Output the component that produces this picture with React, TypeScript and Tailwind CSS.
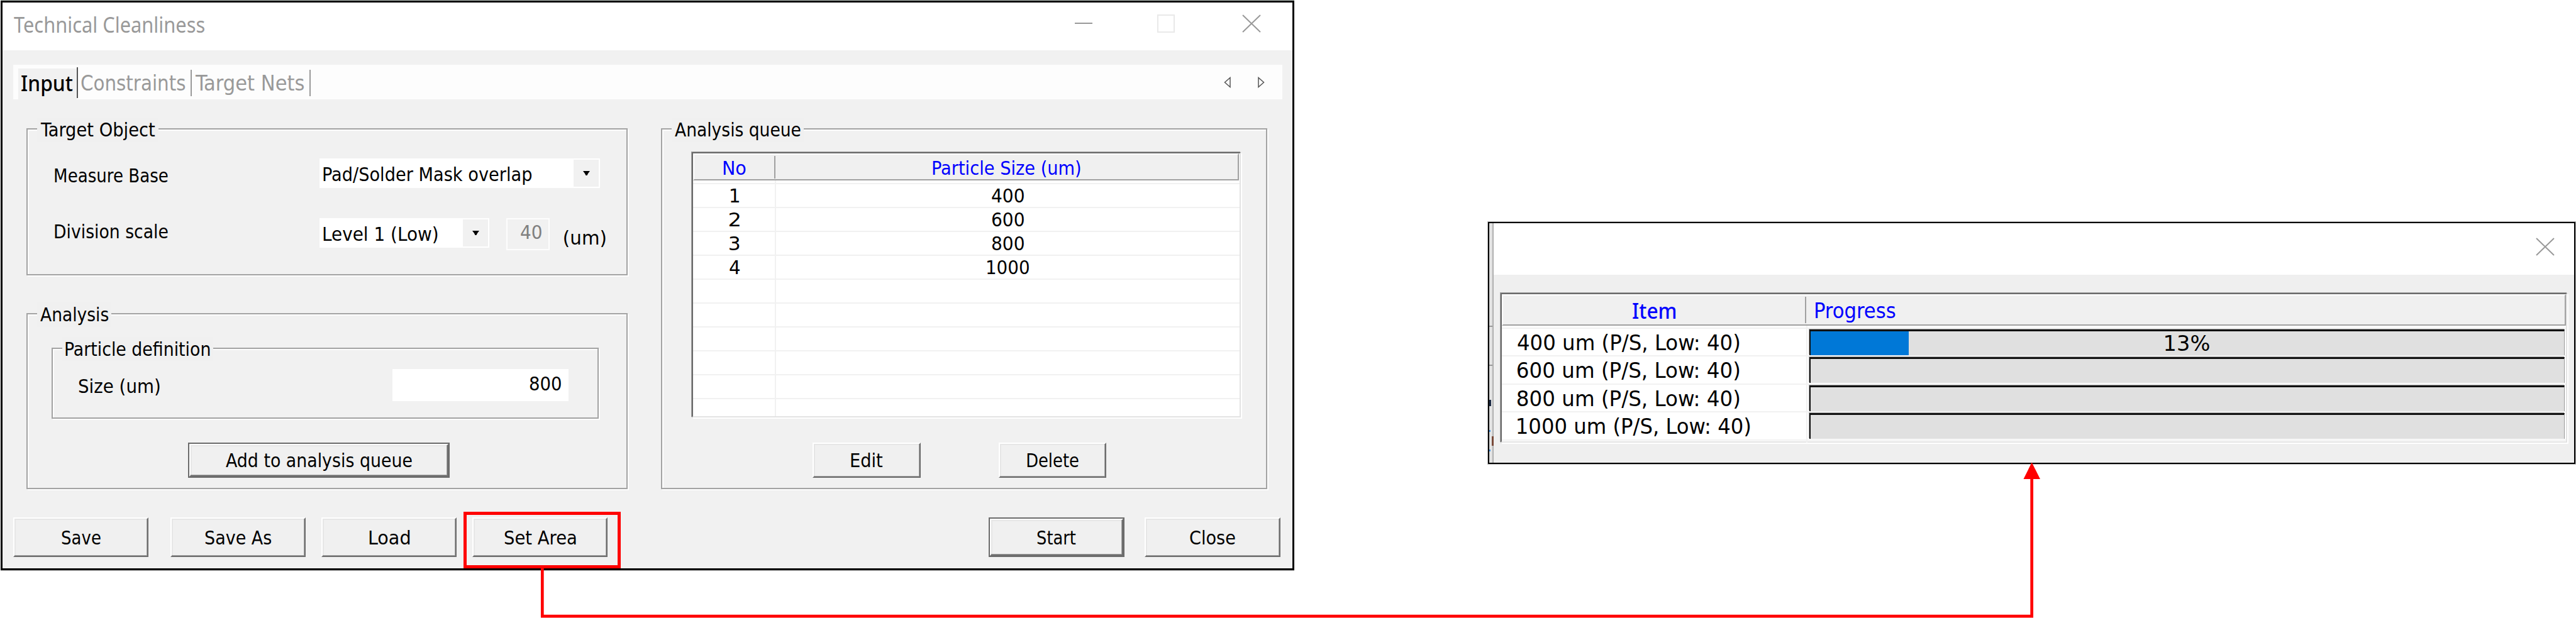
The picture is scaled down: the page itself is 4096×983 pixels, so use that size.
import { ReactNode, useLayoutEffect, useRef } from 'react'
import clsx from 'clsx'

type LabelProps = {
  children: string
  width: number
  className?: string
}

// Text whose inked width is stretched or squeezed to `width`
function Label({ children, width, className }: LabelProps) {
  const ref = useRef<HTMLSpanElement>(null)

  useLayoutEffect(() => {
    const el = ref.current
    const ctx = document.createElement('canvas').getContext('2d')
    if (!el || !ctx) return
    const style = getComputedStyle(el)
    ctx.font = `${style.fontWeight} ${style.fontSize} ${style.fontFamily}`
    const m = ctx.measureText(children)
    const ink = m.actualBoundingBoxLeft + m.actualBoundingBoxRight
    const scale = width / ink
    el.style.transform = `translate(${m.actualBoundingBoxLeft * scale}px, 1px) scaleX(${scale})`
  }, [children, width])

  return (
    <div
      className={clsx(
        'h-[22px] shrink-0 whitespace-nowrap text-[30.6px] leading-[22px]',
        className
      )}
      style={{ width }}
    >
      <span ref={ref} className="inline-block origin-left">
        {children}
      </span>
    </div>
  )
}

type GroupProps = {
  title: string
  titleWidth: number
  className: string
  children: ReactNode
}

function Group({ title, titleWidth, className, children }: GroupProps) {
  return (
    <div
      className={clsx(
        'relative border-2 border-[#a3a3a3] shadow-[inset_2px_2px_0_#fdfdfd,2px_2px_0_#fdfdfd]',
        className
      )}
    >
      <div className="absolute -top-[19px] left-[15px] h-[39px] bg-[#f0f0f0] pl-[5px] pr-[5px] pt-2">
        <Label width={titleWidth}>{title}</Label>
      </div>
      {children}
    </div>
  )
}

type ButtonProps = {
  text: string
  textWidth: number
  className: string
  isDefault?: boolean
}

function Button({ text, textWidth, className, isDefault }: ButtonProps) {
  return (
    <button
      className={clsx(
        'flex shrink-0',
        isDefault && 'border-2 border-[#6b6b6b]',
        className
      )}
    >
      <span className="flex h-full w-full items-center justify-center border-2 border-b-[#6e6e6e] border-l-white border-r-[#6e6e6e] border-t-white bg-[#f0f0f0] text-left shadow-[inset_-1px_-1px_0_#a0a0a0,inset_2px_2px_0_#e6e6e6]">
        <Label width={textWidth}>{text}</Label>
      </span>
    </button>
  )
}

type ComboProps = {
  text: string
  textWidth: number
  className: string
}

function Combo({ text, textWidth, className }: ComboProps) {
  return (
    <div className={clsx('flex h-[47px] bg-white', className)}>
      <Label width={textWidth} className="ml-[6px] mt-[14px]">
        {text}
      </Label>
      <div className="my-[2px] ml-auto mr-[2px] flex w-[40px] items-center justify-center bg-[#f1f1f1]">
        <svg width="11" height="7" viewBox="0 0 11 7">
          <path d="M0 0H11L8 4L6.500 7H4.500L3 4Z" fill="#000" />
        </svg>
      </div>
    </div>
  )
}

function CloseIcon() {
  return (
    <svg width="30" height="29" viewBox="0 0 30 29" className="shrink-0">
      <path d="M1 1L29 28M29 1L1 28" stroke="#999" strokeWidth="2" />
    </svg>
  )
}

const queue = [
  { size: '400', width: 51 },
  { size: '600', width: 51 },
  { size: '800', width: 51 },
  { size: '1000', width: 66 },
]

const tableFrame =
  'border-2 border-b-[#e3e3e3] border-l-[#6b6b6b] border-r-[#e3e3e3] border-t-[#6b6b6b] bg-white shadow-[-1px_-1px_0_#a0a0a0,2px_2px_0_#fff]'

function QueueTable() {
  return (
    <div
      className={clsx(
        'ml-[47px] mt-[36px] flex h-[422px] w-[873px] flex-col overflow-hidden',
        tableFrame
      )}
    >
      <div className="flex h-[43px] w-[868px] shrink-0 border-2 border-b-[#a0a0a0] border-l-white border-r-[#a0a0a0] border-t-white bg-[#f0f0f0] text-[#0000ff]">
        <div className="flex w-[127px] justify-center">
          <Label width={36} className="mt-[10px]">
            No
          </Label>
        </div>
        <div className="mt-[2px] h-[36px] w-[2px] bg-[#a0a0a0]" />
        <div className="flex grow justify-center">
          <Label width={235} className="mt-[10px]">
            Particle Size (um)
          </Label>
        </div>
      </div>
      <div className="flex h-[3.500px] shrink-0">
        <div className="w-[132px] border-r-2 border-[#f1f1f1]" />
      </div>
      {Array.from({ length: 10 }, (_, i) => (
        <div
          key={i}
          className="flex h-[38.1px] shrink-0 border-t-2 border-[#f1f1f1]"
        >
          <div className="flex w-[132px] justify-center border-r-2 border-[#f1f1f1] pl-[2px]">
            {queue[i] && (
              <Label width={i === 0 ? 13 : 16} className="mt-[7px]">
                {String(i + 1)}
              </Label>
            )}
          </div>
          <div className="flex grow justify-center">
            {queue[i] && (
              <Label width={queue[i].width} className="mt-[7px]">
                {queue[i].size}
              </Label>
            )}
          </div>
        </div>
      ))}
    </div>
  )
}

function Tabs() {
  return (
    <div className="ml-[17px] mt-[23px] flex h-[55px] w-[2018px] text-[#999]">
      <div className="flex grow bg-[#fdfdfd] pl-2">
        <div className="mt-[6px] w-[93px] bg-[#f1f1f1] pl-[5px] pt-[11px] text-black">
          <Label
            width={81}
            className="font-['Noto_Sans'] !text-[33.5px] font-medium"
          >
            Input
          </Label>
        </div>
        <div className="mt-[4px] h-[49px] w-[2px] bg-[#555]" />
        <div className="w-[179px] pl-[5px] pt-[18px]">
          <Label width={166} className="!text-[33px]">
            Constraints
          </Label>
        </div>
        <div className="mt-2 h-[42px] w-[2px] bg-[#999]" />
        <div className="w-[187px] pl-[5px] pt-[18px]">
          <Label width={174} className="!text-[33px]">
            Target Nets
          </Label>
        </div>
        <div className="mt-2 h-[42px] w-[2px] bg-[#999]" />
        <div className="ml-auto mr-[28px] mt-[19px] flex gap-[43px]">
          <svg width="11" height="18" viewBox="0 0 11 18">
            <path d="M10 1.500V16.500L1.500 9Z" fill="none" stroke="#555" strokeWidth="1.500" />
          </svg>
          <svg width="11" height="18" viewBox="0 0 11 18">
            <path d="M1 1.500V16.500L9.500 9Z" fill="none" stroke="#555" strokeWidth="1.500" />
          </svg>
        </div>
      </div>
    </div>
  )
}

function CleanlinessDialog() {
  return (
    <div className="ml-px mt-px h-[906px] w-[2057px] shrink-0 border-[3px] border-black bg-[#f1f1f1] shadow-[0_-1px_0_#c4cec8,0_1px_0_#bbb]">
      <div className="flex h-[76px] items-start bg-white pl-[18px] pr-[50px] pt-[19px]">
        <Label
          width={303}
          className="mt-1 font-['Noto_Sans'] !text-[34px] text-[#999]"
        >
          Technical Cleanliness
        </Label>
        <div className="ml-auto mt-[13px] h-[2px] w-[28px] bg-[#999]" />
        <div className="ml-[103px] h-[29px] w-[28px] border-2 border-[#e9e9e9]" />
        <div className="ml-[107px]">
          <CloseIcon />
        </div>
      </div>

      <Tabs />

      <div className="ml-[38px] mt-[46px] flex gap-[53px]">
        <div className="flex w-[956px] flex-col gap-[60px]">
          <Group title="Target Object" titleWidth={183} className="h-[234px]">
            <div className="flex pl-[43px] pt-[46px]">
              <Label width={180} className="mt-[16px]">
                Measure Base
              </Label>
              <Combo
                text="Pad/Solder Mask overlap"
                textWidth={331}
                className="ml-[241px] w-[446px]"
              />
            </div>
            <div className="mt-[48px] flex pl-[43px]">
              <Label width={180} className="mt-[10px]">
                Division scale
              </Label>
              <Combo
                text="Level 1 (Low)"
                textWidth={182}
                className="ml-[241px] w-[270px]"
              />
              <div className="ml-[27px] h-[51px] w-[69px] border-2 border-[#fdfdfd] pl-[21px] pt-[9px] text-[#808080]">
                <Label width={33}>40</Label>
              </div>
              <Label width={66} className="ml-[23px] mt-[20px]">
                (um)
              </Label>
            </div>
          </Group>

          <Group title="Analysis" titleWidth={108} className="h-[280px]">
            <Group
              title="Particle definition"
              titleWidth={230}
              className="ml-[38px] mt-[53px] h-[113px] w-[870px]"
            >
              <div className="flex pl-[41px] pt-[32px]">
                <Label width={129} className="mt-[16px]">
                  Size (um)
                </Label>
                <div className="ml-[370px] flex h-[51px] w-[280px] justify-end bg-white pr-3 pt-[12px]">
                  <Label width={50}>800</Label>
                </div>
              </div>
            </Group>
            <Button
              text="Add to analysis queue"
              textWidth={296}
              className="ml-[255px] mt-[38px] h-[56px] w-[416px]"
              isDefault
            />
          </Group>
        </div>

        <Group
          title="Analysis queue"
          titleWidth={200}
          className="h-[574px] w-[964px]"
        >
          <QueueTable />
          <div className="ml-[239px] mt-[40px] flex gap-[124px]">
            <Button text="Edit" textWidth={51} className="h-[56px] w-[172px]" />
            <Button text="Delete" textWidth={82} className="h-[56px] w-[171px]" />
          </div>
        </Group>
      </div>

      <div className="ml-[17px] mt-[45px] flex h-[63px] w-[2015px] gap-[25px]">
        <Button text="Save" textWidth={62} className="mr-[10px] w-[215px]" />
        <Button text="Save As" textWidth={105} className="w-[215px]" />
        <Button text="Load" textWidth={64} className="w-[215px]" />
        <Button text="Set Area" textWidth={114} className="w-[215px]" />
        <Button
          text="Start"
          textWidth={62}
          className="ml-auto w-[216px]"
          isDefault
        />
        <Button text="Close" textWidth={72} className="ml-[7px] w-[216px]" />
      </div>
    </div>
  )
}

const progress = [
  { item: '400 um (P/S, Low: 40)', width: 353, percent: 13 },
  { item: '600 um (P/S, Low: 40)', width: 353, percent: 0 },
  { item: '800 um (P/S, Low: 40)', width: 353, percent: 0 },
  { item: '1000 um (P/S, Low: 40)', width: 370, percent: 0 },
]

function ProgressDialog() {
  return (
    <div className="ml-[308px] mt-[353px] flex h-[385px] w-[1729px] shrink-0 border-2 border-black bg-[#efefef] shadow-[0_0_0_1px_#bbb]">
      <div className="w-[7px] shrink-0 border-r-2 border-[#b0b0b0] bg-[#e2e2e2]">
        <div className="mt-[163px] h-[2px] bg-[#999]" />
        <div className="mt-[60px] h-[2px] bg-[#999]" />
        <div className="mt-[54px] h-[10px] w-[3px] bg-[#1c2a44]" />
        <div className="mt-[38px] h-[3px] w-[2px] bg-[#4a9ae8]" />
        <div className="ml-[4px] mt-[7px] h-[15px] w-[3px] bg-[#7a4a3a]" />
        <div className="mt-[6px] h-[3px] w-[2px] bg-[#4a9ae8]" />
      </div>
      <div className="grow">
        <div className="flex h-[82px] justify-end bg-white pr-[31px] pt-[23px]">
          <CloseIcon />
        </div>
        <div
          className={clsx(
            'ml-[11px] mt-[29px] h-[238px] w-[1696px]',
            tableFrame
          )}
        >
          <div className="flex h-[50px] border-2 border-b-[#a0a0a0] border-l-white border-r-[#a0a0a0] border-t-white bg-[#f0f0f0] text-[#0000ff]">
            <div className="flex w-[480px] justify-center">
              <Label
                width={68}
                className="mt-[12px] font-['Noto_Sans'] !text-[34.5px] font-medium"
              >
                Item
              </Label>
            </div>
            <div className="mt-[2px] h-[42px] w-[2px] bg-[#a0a0a0]" />
            <Label width={128} className="ml-[14px] mt-[13px] !text-[33.5px]">
              Progress
            </Label>
          </div>
          <div className="flex h-[2.500px]">
            <div className="w-[486px] border-r-2 border-[#f1f1f1]" />
          </div>
          {progress.map(({ item, width, percent }) => (
            <div
              key={item}
              className="flex h-[44.6px] border-t-2 border-[#f1f1f1]"
            >
              <div className="w-[486px] shrink-0 border-r-2 border-[#f1f1f1] pl-[25px] pt-[11px]">
                <Label width={width} className="!text-[33.5px]">
                  {item}
                </Label>
              </div>
              <div className="relative ml-[3px] mr-[2px] mt-px h-[41px] grow border-l-2 border-r border-t-[3px] border-l-[#111] border-r-[#999] border-t-[#111] bg-[#e0e0e0] shadow-[-1px_-1px_0_#aaa]">
                <div
                  className="h-full bg-[#0078d7]"
                  style={{ width: `${percent}%` }}
                />
                {percent > 0 && (
                  <div className="absolute inset-0 flex justify-center pt-[8px]">
                    <Label width={70} className="!text-[33px]">
                      {`${percent}%`}
                    </Label>
                  </div>
                )}
              </div>
            </div>
          ))}
          <div className="flex h-[5px] border-t-2 border-[#f1f1f1]">
            <div className="w-[486px] border-r-2 border-[#f1f1f1]" />
          </div>
        </div>
      </div>
    </div>
  )
}

export default function App() {
  return (
    <div className="relative flex h-[983px] w-[4096px] items-start overflow-hidden bg-white font-['DejaVu_Sans_Condensed','DejaVu_Sans',sans-serif] text-black">
      <CleanlinessDialog />
      <ProgressDialog />

      {/* callout from "Set Area" to the progress dialog */}
      <div className="absolute left-[737px] top-[814px] h-[90px] w-[250px] border-[5px] border-[#ff0000]" />
      <svg
        className="absolute left-0 top-0"
        width="4096"
        height="983"
        viewBox="0 0 4096 983"
      >
        <path
          d="M862.300 902V980.200H3230.700V758"
          fill="none"
          stroke="#ff0000"
          strokeWidth="4.700"
        />
        <path d="M3230.700 735.500L3217.500 762H3244Z" fill="#ff0000" />
      </svg>
    </div>
  )
}
